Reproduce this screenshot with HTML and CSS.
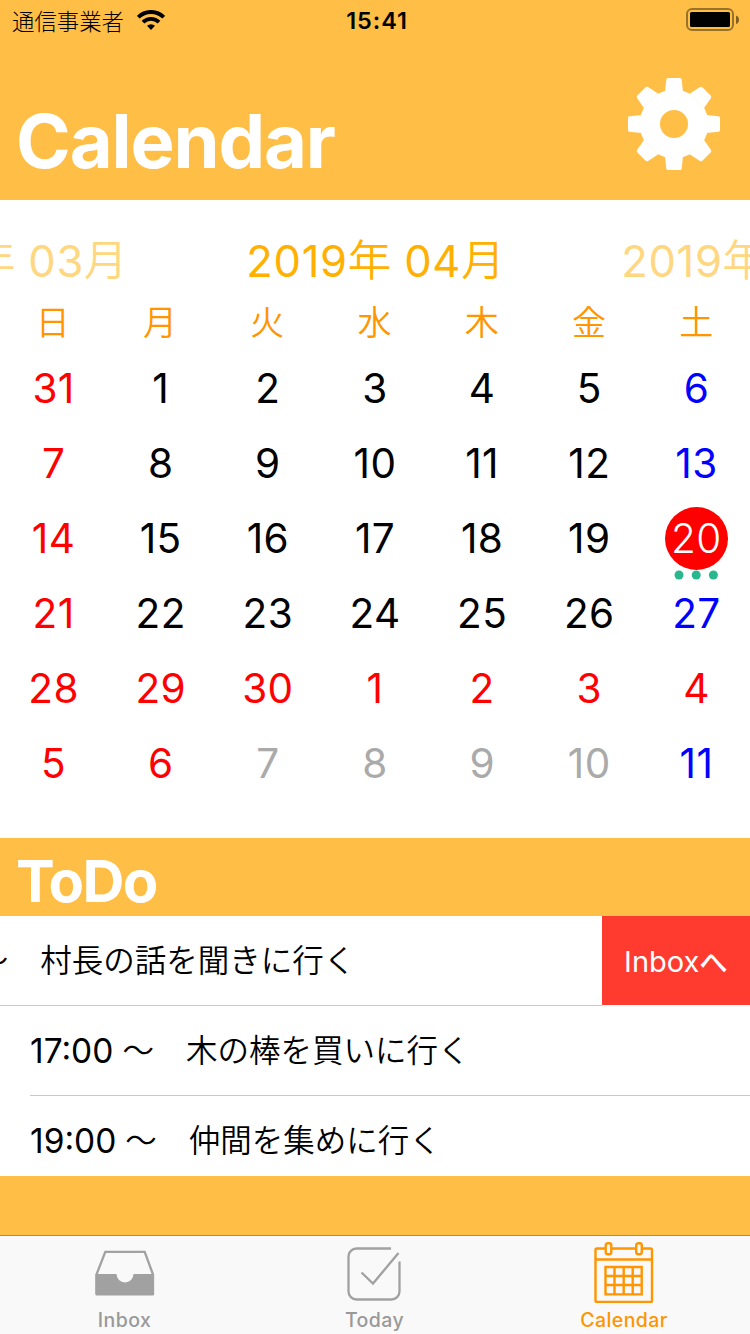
FILE: index.html
```html
<!DOCTYPE html>
<html lang="ja">
<head>
<meta charset="utf-8">
<title>Calendar</title>
<link rel="stylesheet" href="styles.css">
</head>
<body>
<div class="screen">
  <div class="status">
    <div class="carrier"><span>通信事業者</span>
      <svg class="wifi" width="28" height="20" viewBox="0 0 28 20"><g fill="none" stroke="#000" stroke-width="3.9"><path d="M1.200 7.200A18.200 18.200 0 0 1 26.800 7.200"/><path d="M6 12.200A11.300 11.300 0 0 1 22 12.200"/></g><path d="M14 20l-4-4.200a5.800 5.800 0 0 1 8 0z"/></svg>
    </div>
    <div class="clock">15:41</div>
    <svg class="battery" width="54" height="24" viewBox="0 0 54 24"><rect x="1" y="1" width="46" height="21" rx="5" fill="none" stroke="#000" stroke-opacity=".4" stroke-width="2"/><rect x="4" y="4" width="40" height="15" rx="1.500"/><path d="M50 7.500q3 1 3 4.300t-3 4.300z" fill-opacity=".5"/></svg>
  </div>
  <header class="header">
    <h1 class="title">Calendar</h1>
    <svg class="gear" width="92" height="92" viewBox="-46 -46 92 92">
      <g fill="#fff"><path fill-rule="evenodd" d="M9.400-33 16.600-30 30-16.500 33-9.400V9.400L30 16.500 16.600 30 9.400 33H-9.400L-16.600 30-30 16.500-33 9.400V-9.400L-30-16.500-16.600-30-9.400-33zM14 0A14 14 0 1 0-14 0A14 14 0 1 0 14 0z"/>
      <path d="M-9-32L-7.700-44.500Q-7.500-46-6-46H6Q7.500-46 7.700-44.500L9-32zM-9 32L-7.700 44.500Q-7.500 46-6 46H6Q7.500 46 7.700 44.500L9 32zM-32-9L-44.500-7.700Q-46-7.500-46-6V6Q-46 7.500-44.500 7.700L-32 9zM32-9L44.500-7.700Q46-7.500 46-6V6Q46 7.500 44.500 7.700L32 9z"/>
      <path d="M-16-30.600L-26-37Q-27.500-37.700-28.600-36.600L-36.600-28.600Q-37.700-27.500-37-26L-30-16zM16-30.600L26-37Q27.500-37.700 28.600-36.600L36.600-28.600Q37.700-27.500 37-26L30-16zM-16 30.600L-26 37Q-27.500 37.700-28.600 36.600L-36.600 28.600Q-37.700 27.500-37 26L-30 16zM16 30.600L26 37Q27.500 37.700 28.600 36.600L36.600 28.600Q37.700 27.500 37 26L30 16z"/></g>
    </svg>
  </header>
  <section class="calendar">
    <div class="months"><span class="month side">2019<i>年</i> 03<i>月</i></span><span class="month">2019<i>年</i> 04<i>月</i></span><span class="month side">2019<i>年</i> 05<i>月</i></span></div>
    <div class="weekdays"><span>日</span><span>月</span><span>火</span><span>水</span><span>木</span><span>金</span><span>土</span></div>
    <div class="days">
      <span class="red">31</span><span>1</span><span>2</span><span>3</span><span>4</span><span>5</span><span class="blue">6</span>
      <span class="red">7</span><span>8</span><span>9</span><span>10</span><span>11</span><span>12</span><span class="blue">13</span>
      <span class="red">14</span><span>15</span><span>16</span><span>17</span><span>18</span><span>19</span><span class="today"><b>20</b><svg class="dots" width="44" height="10" viewBox="0 0 44 10" fill="#29b78d"><circle cx="5" cy="5" r="4.500"/><circle cx="22.200" cy="5" r="4.500"/><circle cx="39.400" cy="5" r="4.500"/></svg></span>
      <span class="red">21</span><span>22</span><span>23</span><span>24</span><span>25</span><span>26</span><span class="blue">27</span>
      <span class="red">28</span><span class="red">29</span><span class="red">30</span><span class="red">1</span><span class="red">2</span><span class="red">3</span><span class="red">4</span>
      <span class="red">5</span><span class="red">6</span><span class="gray">7</span><span class="gray">8</span><span class="gray">9</span><span class="gray">10</span><span class="blue">11</span>
    </div>
  </section>
  <h2 class="todo-title">ToDo</h2>
  <div class="todos">
    <div class="todo swiped"><div class="entry"><span class="time">10:00</span><span class="tilde">～</span><span class="task">村長の話を聞きに行く</span></div><div class="action"><span>Inbox</span><span class="he">へ</span></div></div>
    <div class="todo"><div class="entry"><span class="time">17:00</span><span class="tilde">～</span><span class="task">木の棒を買いに行く</span></div></div>
    <div class="todo"><div class="entry"><span class="time">19:00</span><span class="tilde">～</span><span class="task">仲間を集めに行く</span></div></div>
  </div>
  <nav class="tabs">
    <div class="tab"><svg width="60" height="62" viewBox="0 0 60 62"><path d="M10.300 10.800H49.700L58 33.500V52H1.500V33.500z" fill="none" stroke="#a1a1a1" stroke-width="2.300"/><path d="M.5 33H21.500a8.500 8.500 0 0 0 17 0H59V53.500q0 1-1 1H1.500q-1 0-1-1z" fill="#a1a1a1"/></svg><span>Inbox</span></div>
    <div class="tab"><svg width="60" height="62" viewBox="0 0 60 62" fill="none" stroke="#a1a1a1" stroke-width="2.300"><path d="M46 7.500H11.500a8 8 0 0 0-8 8V50.500a8 8 0 0 0 8 8H46.500a8 8 0 0 0 8-8V20.500"/><path d="M16.500 31.500L28 42.500 53.500 12"/></svg><span>Today</span></div>
    <div class="tab active"><svg width="60" height="62" viewBox="0 0 60 62" fill="none" stroke="#ff9500" stroke-width="2.400"><path d="M11.500 7.500H3Q1.500 7.500 1.500 9V60Q1.500 61 3 61H56.500Q58 61 58 60V9Q58 7.500 56.500 7.500H48M17.500 7.500H42M1.500 18.500H58"/><rect x="11.700" y="2.200" width="5.600" height="11" rx="2.200"/><rect x="42.200" y="2.200" width="5.600" height="11" rx="2.200"/><path d="M11.500 26H47.700V53.400H11.500zM20.500 26V53.400M29.700 26V53.400M38.700 26V53.400M11.500 35H47.700M11.500 44H47.700"/></svg><span>Calendar</span></div>
  </nav>
</div>
</body>
</html>
```
FILE: styles.css
```css
* { box-sizing: border-box; }
body { margin: 0; font-family: Inter, "Noto Sans CJK JP", sans-serif; color: #000; }
.screen { width: 750px; height: 1334px; overflow: hidden; background: #ffbf47; display: flex; flex-direction: column; }
.status { height: 40px; flex: none; display: grid; grid-template-columns: 1fr auto 1fr; align-items: center; padding: 0 10px 0 12px; }
.carrier { display: flex; align-items: center; gap: 13px; font: 300 22.400px/40px "Noto Sans CJK JP", sans-serif; }
.carrier span { height: 40px; }
.clock { font-size: 23.500px; font-weight: 600; letter-spacing: .9px; margin: 1px 0 0 2px; }
.battery { justify-self: end; }
.header { height: 160px; flex: none; display: flex; justify-content: space-between; padding: 38px 30px 0 16px; }
.title { margin: 17px 0 0; font-size: 74px; line-height: 92px; font-weight: 700; color: #fff; letter-spacing: -1.100px; }
.calendar { height: 638px; flex: none; background: #fff; overflow: hidden; }
.months { height: 93px; width: 1128px; margin-left: -191px; padding-top: 28px; display: grid; grid-template-columns: 380px 373px 375px; justify-items: center; }
.month { display: flex; white-space: pre; font-size: 43.500px; line-height: 66px; font-weight: 370; color: #ffb000; letter-spacing: .7px; }
.month i { font-family: "Noto Sans CJK JP", sans-serif; font-style: normal; font-weight: 350; line-height: 60px; letter-spacing: 0; }
.side { color: #ffd780; }
.weekdays, .days { display: grid; grid-template-columns: repeat(7, 1fr); text-align: center; }
.weekdays { height: 58px; margin-left: -1px; font: 350 34px/56px "Noto Sans CJK JP", sans-serif; color: #ff9500; }
.days { grid-auto-rows: 75px; font-size: 40.500px; line-height: 76px; font-weight: 370; letter-spacing: .4px; }
.red { color: #f00; }
.blue { color: #00f; }
.gray { color: #aaa; }
.today { display: flex; flex-direction: column; align-items: center; color: #fff; padding-top: 6px; }
.today b { width: 63px; height: 63px; border-radius: 50%; background: #f00; font-weight: 350; line-height: 63px; flex: none; }
.dots { flex: none; }
.todo-title { margin: 0; height: 78px; flex: none; padding: 6px 0 0 16px; color: #fff; font-size: 58px; line-height: 74px; font-weight: 700; letter-spacing: -1.600px; }
.todos { height: 260px; flex: none; background: #fff; overflow: hidden; }
.todo { height: 90px; padding-left: 30px; }
.entry { height: 90px; border-bottom: 1px solid #c8c7cc; display: flex; align-items: center; white-space: nowrap; font-size: 33.500px; font-weight: 370; }
.tilde, .task { font-family: "Noto Sans CJK JP", sans-serif; font-weight: 350; font-size: 31.500px; padding-bottom: 5px; }
.tilde { margin-left: 9px; }
.task { margin-left: 32px; }
.swiped { padding: 0; display: flex; }
.swiped .entry { width: 602px; padding-left: 30px; overflow: hidden; }
.swiped .time { margin-left: -149px; }
.action { width: 148px; height: 89px; padding-top: 2px; background: #ff3b30; color: #fff; display: flex; align-items: center; justify-content: center; font-size: 29px; }
.he { font: 500 28.500px "Noto Sans CJK JP", sans-serif; padding-bottom: 2px; }
.tabs { height: 99px; flex: none; margin-top: 59px; background: #f9f9f9; border-top: 1px solid #b88a35; display: grid; grid-template-columns: repeat(3, 1fr); }
.tab { display: flex; flex-direction: column; align-items: center; padding: 5px 1px 0 0; color: #999; font-size: 19.500px; line-height: 24px; font-weight: 500; letter-spacing: .4px; }
.tab span { margin-top: 5px; }
.tab.active { color: #ff9500; padding-right: 2px; }
```
